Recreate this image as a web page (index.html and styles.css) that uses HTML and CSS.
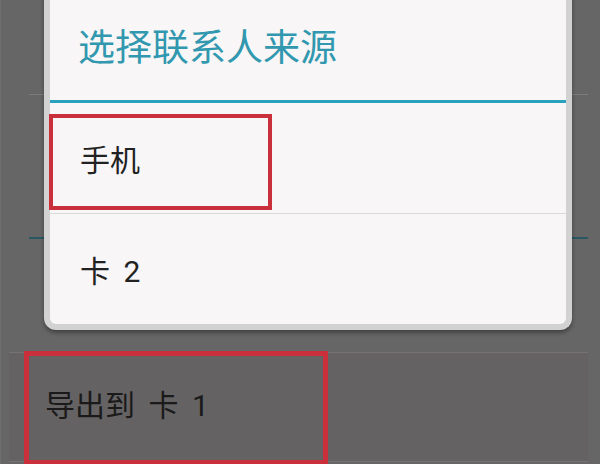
FILE: index.html
```html
<!DOCTYPE html>
<html lang="zh-CN">
<head>
  <meta charset="UTF-8">
  <meta name="viewport" content="width=device-width, initial-scale=1.0">
  <title>选择联系人来源</title>
  <link rel="stylesheet" href="styles.css">
</head>
<body>

  <div class="screen">
    <div class="page">
      <div class="rule rule-light"></div>
      <div class="rule rule-accent"></div>
      <div class="export-row">
        <span class="export-label">导出到 卡 1</span>
        <div class="highlight highlight-export"></div>
      </div>
    </div>

    <div class="dialog">
      <div class="dialog-title">选择联系人来源</div>
      <ul class="source-list">
        <li class="source-item">
          手机
          <div class="highlight highlight-phone"></div>
        </li>
        <li class="source-item">卡 2</li>
      </ul>
    </div>
  </div>

</body>
</html>
```

FILE: styles.css
```css
body {
  margin: 0;
  padding: 0;
  background: #666666;
  font-family: Roboto, "Noto Sans CJK SC", sans-serif;
  overflow: hidden;
}

.screen {
  position: relative;
  width: 600px;
  height: 464px;
  overflow: hidden;
}

/* page underneath the dialog */
.page {
  display: flex;
  flex-direction: column;
  height: 100%;
  padding-left: 8px;
  box-sizing: border-box;
  border-left: 1px solid #6e6e6e;
}

.rule {
  margin-left: 20px;
  margin-right: 12px;
}

.rule-light {
  margin-top: 94px;
  height: 1px;
  background: #7c7c7c;
}

.rule-accent {
  margin-top: 142px;
  height: 2px;
  background: #2a5862;
}

.export-row {
  position: relative;
  margin-top: 113px;
  margin-right: 12px;
  height: 110px;
  border-top: 1px solid #777373;
  border-bottom: 1px solid #777373;
  background: #656263;
  display: flex;
  align-items: center;
  padding-bottom: 8px;
  box-sizing: border-box;
}

.export-label {
  padding-left: 36px;
  font-size: 30px;
  color: #1a1a1a;
  word-spacing: 6px;
}

.highlight {
  position: absolute;
  border: 4px solid #c9303c;
  box-sizing: border-box;
}

.highlight-export {
  left: 15px;
  top: -2px;
  width: 304px;
  height: 114px;
  border-width: 5px;
}

/* dialog */
.dialog {
  position: absolute;
  left: 44px;
  top: -10px;
  width: 528px;
  box-sizing: border-box;
  background: #f8f6f6;
  border: 6px solid #d2d2d2;
  border-top: none;
  border-radius: 0 0 12px 12px;
  box-shadow: 0 3px 4px rgba(0, 0, 0, 0.35);
}

.dialog-title {
  height: 113px;
  padding-left: 28px;
  box-sizing: border-box;
  display: flex;
  align-items: center;
  font-size: 37px;
  color: #3198af;
  border-bottom: 3px solid #2aa2bd;
}

.source-list {
  list-style: none;
  margin: 0;
  padding: 0;
}

.source-item {
  position: relative;
  height: 110px;
  padding-left: 30px;
  display: flex;
  align-items: center;
  font-size: 30px;
  color: #222222;
  word-spacing: 6px;
}

.source-item + .source-item {
  border-top: 1px solid #d9d9d9;
}

.highlight-phone {
  left: -1px;
  top: 11px;
  width: 223px;
  height: 96px;
}
```
